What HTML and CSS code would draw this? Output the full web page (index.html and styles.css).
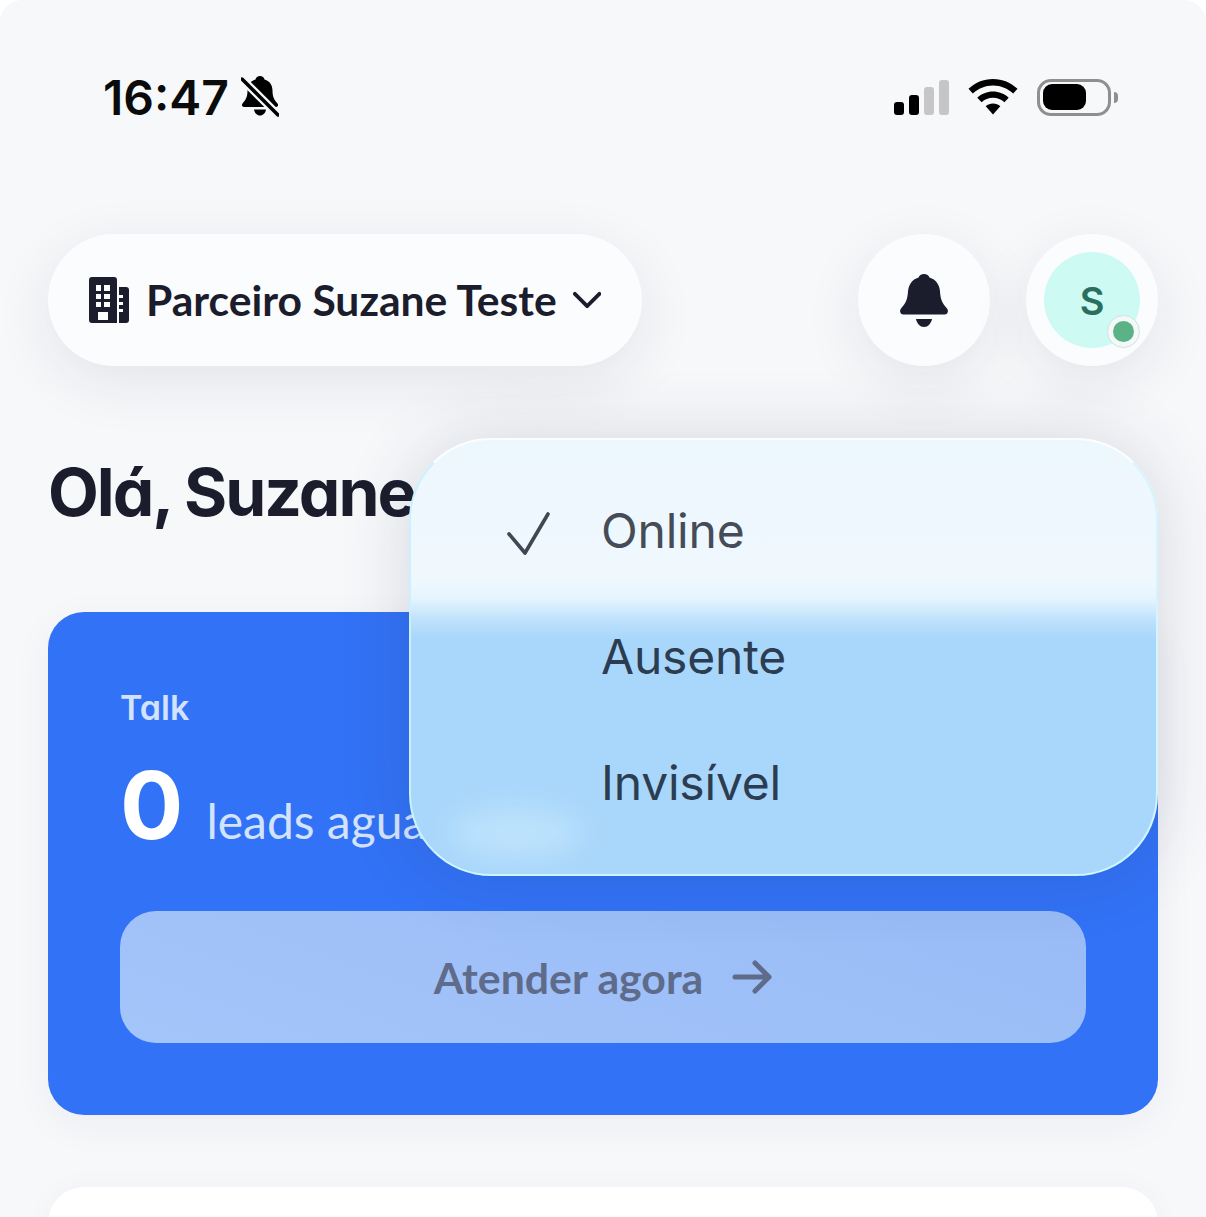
FILE: index.html
```html
<!DOCTYPE html>
<html lang="pt-BR">
<head>
    <meta name="viewport" content="width=device-width, initial-scale=1.0">
    <title>Talk</title>
    <link rel="stylesheet" href="styles.css">
</head>
<body>
    <div class="screen">
        <div class="status-bar">
            <div class="status-left">
                <span class="clock">16:47</span>
                <svg class="icon-muted" width="38" height="42" viewBox="0 0 38 42">
                    <path d="M19 0c2.500 0 4 1.500 4.500 3.500 5.500 1.500 8 6 8 11 0 6 1.500 9 5 13 1.200 1.500.5 3.500-1.500 3.500H3c-2 0-2.700-2-1.500-3.500 3.500-4 5-7 5-13 0-5 2.500-9.500 8-11C15 1.500 16.500 0 19 0z"/>
                    <path d="M13 33.500h12c-.5 3.500-3 6-6 6s-5.500-2.500-6-6z"/>
                    <path class="muted-gap" d="M1 3l36 36"/>
                    <path class="muted-line" d="M1 3l36 36"/>
                </svg>
            </div>
            <div class="status-right">
                <div class="signal">
                    <span class="bar bar-1"></span>
                    <span class="bar bar-2"></span>
                    <span class="bar bar-3"></span>
                    <span class="bar bar-4"></span>
                </div>
                <svg width="50" height="36" viewBox="0 0 50 36">
                    <path d="M25 0c9.500 0 18 3.700 24.500 9.800l-4.300 4.600C39.800 9.400 32.800 6.400 25 6.400S10.200 9.400 4.800 14.400L.5 9.800C7 3.700 15.500 0 25 0z"/>
                    <path d="M25 12.500c6 0 11.500 2.300 15.700 6.200l-4.300 4.600c-3-2.800-7-4.500-11.400-4.500s-8.400 1.700-11.400 4.500l-4.300-4.600c4.200-3.900 9.700-6.200 15.700-6.200z"/>
                    <path d="M25 24.500c2.800 0 5.300 1 7.300 2.800L25 35.500l-7.300-8.200c2-1.800 4.500-2.800 7.300-2.800z"/>
                </svg>
                <div class="battery">
                    <div class="battery-body"><span class="battery-fill"></span></div>
                    <span class="battery-tip"></span>
                </div>
            </div>
        </div>

        <div class="top-bar">
            <button class="company-pill">
                <svg class="icon-building" width="40" height="46" viewBox="0 0 40 46">
                    <path fill-rule="evenodd" d="M3 0h22a3 3 0 0 1 3 3v43H3a3 3 0 0 1-3-3V3a3 3 0 0 1 3-3zM7 8v6h5V8zm8 0v6h6V8zM7 17v5h5v-5zm8 0v5h6v-5zM7 25v5h5v-5zm8 0v5h6v-5zM9 35v8h10v-8z"/>
                    <path fill-rule="evenodd" d="M30 10h7a3 3 0 0 1 3 3v30a3 3 0 0 1-3 3h-7zm0 8v3h4v-3zm0 7v3h4v-3zm0 7v3h4v-3z"/>
                </svg>
                <span class="company-name">Parceiro Suzane Teste</span>
                <svg width="30" height="18" viewBox="0 0 30 18">
                    <path class="chevron" d="M2 2.500l13 13 13-13"/>
                </svg>
            </button>
            <div class="top-actions">
                <button class="round-btn">
                    <svg width="48" height="53" viewBox="0 0 48 53">
                        <path d="M24 0c3 0 4.500 1.500 5.500 3.500C36 5.500 39.500 11 40 17.500c.4 6.500 1.500 11 7 17 1.800 2 1 6-2.500 6h-41C0 40.500-.8 36.500 1 34.500c5.500-6 6.600-10.500 7-17C8.500 11 12 5.500 18.500 3.500 19.500 1.500 21 0 24 0z"/>
                        <path d="M16 45h16c-1 4.500-4 8-8 8s-7-3.500-8-8z"/>
                    </svg>
                </button>
                <button class="round-btn">
                    <span class="avatar">S</span>
                    <span class="presence"><span class="presence-dot"></span></span>
                </button>
            </div>
        </div>

        <h1 class="greeting">Olá, Suzane</h1>

        <div class="talk-card">
            <p class="talk-label">Talk</p>
            <p class="talk-count"><span class="count">0</span><span class="count-text">leads aguardando</span></p>
            <div class="attend-btn">
                <span>Atender agora</span>
                <svg width="40" height="34" viewBox="0 0 40 34">
                    <path class="arrow" d="M3 17h34M23 3l14 14-14 14"/>
                </svg>
            </div>
        </div>

        <div class="next-card"></div>

        <div class="status-menu">
            <span class="menu-glow"></span>
            <div class="menu-item">
                <svg class="menu-check" width="46" height="46" viewBox="0 0 46 46">
                    <path d="M3 24l16 19L42 4"/>
                </svg>
                <span>Online</span>
            </div>
            <div class="menu-item menu-item-dark"><span>Ausente</span></div>
            <div class="menu-item menu-item-dark"><span>Invisível</span></div>
        </div>
    </div>
</body>
</html>
```

FILE: styles.css
```css
* {
    box-sizing: border-box;
}
body {
    margin: 0;
    background-color: #fff;
    font-family: 'Lato', sans-serif;
    overflow: hidden;
}
.screen {
    position: relative;
    width: 1206px;
    height: 1217px;
    padding: 0 48px;
    overflow: hidden;
    border-radius: 22px 22px 0 0;
    background-color: #f7f8fa;
}
button {
    border: none;
    cursor: pointer;
    font-family: inherit;
}
p, h1 {
    margin: 0;
}

/* status bar */
.status-bar {
    display: flex;
    justify-content: space-between;
    align-items: center;
    height: 50px;
    margin-top: 72px;
    padding: 0 40px 0 55px;
}
.status-left {
    display: flex;
    align-items: center;
    gap: 12px;
}
.clock {
    font-family: 'Inter', sans-serif;
    font-size: 48px;
    font-weight: 600;
    color: #0b0b0c;
}
.icon-muted path {
    fill: #000;
}
.icon-muted .muted-gap {
    fill: none;
    stroke: #f7f8fa;
    stroke-width: 8;
}
.icon-muted .muted-line {
    fill: none;
    stroke: #000;
    stroke-width: 3.5;
    stroke-linecap: round;
}
.status-right {
    display: flex;
    align-items: center;
    gap: 19px;
}
.signal {
    display: flex;
    align-items: flex-end;
    gap: 5px;
    height: 35px;
}
.bar {
    width: 10px;
    border-radius: 3px;
    background-color: #000;
}
.bar-1 { height: 13px; }
.bar-2 { height: 20px; }
.bar-3 { height: 28px; background-color: #c6c6c8; }
.bar-4 { height: 35px; background-color: #c6c6c8; }
.battery {
    display: flex;
    align-items: center;
    gap: 3px;
}
.battery-body {
    width: 74px;
    height: 37px;
    padding: 2.5px 3px;
    border: 3px solid #8f8f91;
    border-radius: 14px;
}
.battery-fill {
    display: block;
    width: 43px;
    height: 100%;
    border-radius: 9px;
    background-color: #000;
}
.battery-tip {
    width: 4px;
    height: 11px;
    border-radius: 0 4px 4px 0;
    background-color: #8f8f91;
}

/* top bar */
.top-bar {
    display: flex;
    justify-content: space-between;
    margin-top: 112px;
}
.company-pill {
    display: flex;
    align-items: center;
    width: 594px;
    height: 132px;
    padding: 0 41px;
    border-radius: 66px;
    background-color: #fbfcfe;
    box-shadow: 0 16px 60px rgba(30, 35, 60, 0.09);
}
.icon-building {
    fill: #1b1d2c;
    flex: none;
}
.company-name {
    margin: 0 16px 0 17px;
    padding-bottom: 2px;
    font-size: 42.6px;
    font-weight: 700;
    color: #1b1d2c;
    white-space: nowrap;
}
.chevron {
    fill: none;
    stroke: #1b1d2c;
    stroke-width: 4;
    stroke-linecap: round;
    stroke-linejoin: round;
}
.top-actions {
    display: flex;
    gap: 36px;
}
.round-btn {
    position: relative;
    display: flex;
    align-items: center;
    justify-content: center;
    width: 132px;
    height: 132px;
    padding: 0;
    border-radius: 50%;
    background-color: #fbfcfe;
    box-shadow: 0 16px 60px rgba(30, 35, 60, 0.09);
}
.round-btn svg {
    fill: #1b1d2c;
}
.avatar {
    display: flex;
    align-items: center;
    justify-content: center;
    width: 96px;
    height: 96px;
    padding-top: 2px;
    border-radius: 50%;
    background-color: #cdfaf3;
    font-family: 'Inter', sans-serif;
    font-size: 38px;
    font-weight: 600;
    color: #2c6e5e;
}
.presence {
    position: absolute;
    right: 18px;
    bottom: 18px;
    display: flex;
    align-items: center;
    justify-content: center;
    width: 33px;
    height: 33px;
    border: 1px solid #cfe3de;
    border-radius: 50%;
    background-color: #f4f9f8;
}
.presence-dot {
    width: 21px;
    height: 21px;
    border-radius: 50%;
    background-color: #5ab286;
}

/* greeting */
.greeting {
    margin-top: 82px;
    font-family: 'Inter', sans-serif;
    font-feature-settings: 'cv11';
    font-size: 66px;
    font-weight: 700;
    line-height: 88px;
    letter-spacing: -2px;
    color: #1b1d2c;
    white-space: nowrap;
}

/* blue card */
.talk-card {
    height: 503px;
    margin-top: 76px;
    padding: 74px 72px 0;
    border-radius: 36px;
    background-color: #3272f6;
    box-shadow: 0 10px 40px rgba(30, 40, 80, 0.05);
}
.talk-label {
    font-family: 'Inter', sans-serif;
    font-feature-settings: 'cv11';
    font-size: 34px;
    font-weight: 600;
    line-height: 44px;
    color: #d3e3fd;
}
.talk-count {
    display: flex;
    align-items: baseline;
    margin-top: 18px;
    height: 110px;
}
.count {
    font-family: 'Inter', sans-serif;
    font-size: 94px;
    font-weight: 700;
    color: #fff;
}
.count-text {
    margin-left: 23px;
    font-size: 48px;
    color: #d3e3fd;
    white-space: nowrap;
}
.attend-btn {
    display: flex;
    align-items: center;
    justify-content: center;
    gap: 29px;
    height: 132px;
    margin-top: 53px;
    border-radius: 36px;
    background: linear-gradient(20deg, #a4c5fa, #99bbf6);
    font-size: 42.8px;
    font-weight: 700;
    color: #5f6b8a;
}
.arrow {
    fill: none;
    stroke: #5f6b8a;
    stroke-width: 5;
    stroke-linecap: round;
    stroke-linejoin: round;
}
.next-card {
    height: 200px;
    margin-top: 72px;
    border-radius: 36px;
    background-color: #fff;
    box-shadow: 0 0 30px rgba(30, 40, 80, 0.03);
}

/* status dropdown */
.status-menu {
    position: absolute;
    top: 438px;
    left: 409px;
    width: 749px;
    height: 438px;
    padding-top: 27px;
    border: 2px solid;
    border-color: #fbfeff #d4f5ff #cdf7ff #c9f1ff;
    border-radius: 82px;
    background: linear-gradient(180deg, #edf7fe 0, #f0f8fe 138px, #e6f5fe 158px, #bfe1fc 180px, #a9d7fb 198px);
    box-shadow: 0 0 70px rgba(40, 50, 90, 0.16);
    overflow: hidden;
}
.menu-glow {
    position: absolute;
    left: 40px;
    top: 368px;
    width: 130px;
    height: 50px;
    border-radius: 50%;
    background-color: #bde2fc;
    filter: blur(14px);
}
.menu-item {
    position: relative;
    display: flex;
    align-items: center;
    height: 126px;
    padding-left: 190px;
    font-family: 'Inter', sans-serif;
    font-size: 48px;
    letter-spacing: -0.2px;
    color: #454c57;
}
.menu-item-dark {
    color: #2c3d52;
}
.menu-check {
    position: absolute;
    left: 95px;
    top: 43px;
    fill: none;
    stroke: #3f4752;
    stroke-width: 3.6;
    stroke-linecap: round;
    stroke-linejoin: round;
}
```
